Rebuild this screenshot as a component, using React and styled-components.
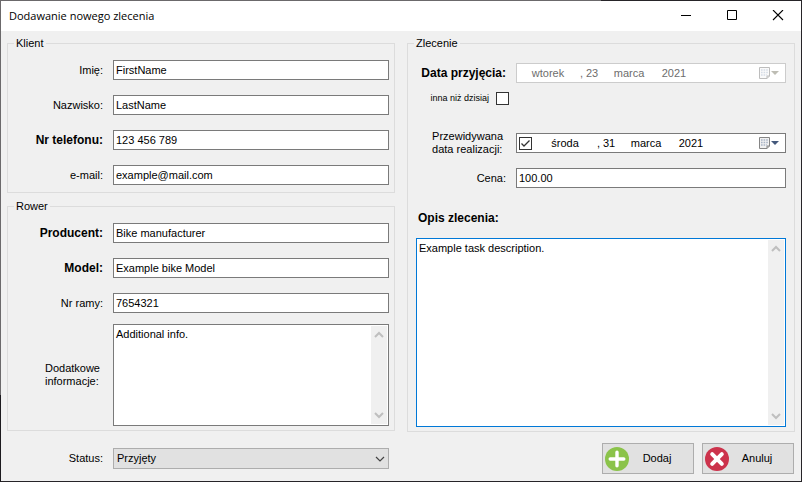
import React from "react";
import styled, { createGlobalStyle, css } from "styled-components";

const GlobalStyle = createGlobalStyle`
  *, *::before, *::after { box-sizing: border-box; }
  html, body, #root { height: 100%; }
  body { margin: 0; background: #f0f0f0; }
  body, input, textarea, select, button {
    font-family: "Liberation Sans", Arial, sans-serif;
    font-size: 11px;
    line-height: 13px;
    color: #000;
  }
`;

const WindowFrame = styled.div`
  min-height: 100%;
  display: flex;
  flex-direction: column;
  padding: 1px;
  background:
    linear-gradient(to right, #6b696b 75%, #262428 75%) top / 100% 1px no-repeat,
    linear-gradient(to bottom, #6b696b 82%, #1c1a1e 82%) left / 1px 100% no-repeat,
    #262428;
`;

const TitleBar = styled.header`
  display: flex;
  align-items: center;
  height: 30px;
  padding-left: 8px;
  background: #fff;
`;

const Title = styled.h1`
  flex: 1;
  margin: 0;
  font: 400 11px/16px "Open Sans", "Noto Sans", sans-serif;
`;

const CaptionButton = styled.button`
  display: grid;
  place-items: center;
  width: 46px;
  height: 30px;
  padding: 0;
  border: 0;
  background: transparent;
`;

const Form = styled.form`
  flex: 1;
  display: grid;
  grid-template-columns: 1fr 1fr;
  grid-template-rows: auto auto;
  align-content: start;
  align-items: start;
  gap: 11px 12px;
  padding: 6px 6px 7px;
  background: #f0f0f0;
`;

const Column = styled.div`
  display: flex;
  flex-direction: column;
  gap: 7px;
  min-width: 0;
`;

const Group = styled.fieldset`
  min-width: 0;
  margin: 0;
  padding: 10px 5px ${(p) => (p.$tight ? 4 : 7)}px 6px;
  border: 1px solid #dcdcdc;
`;

const Legend = styled.legend`
  padding: 0 2px;
  line-height: 13px;
`;

const Rows = styled.div`
  display: flex;
  flex-direction: column;
  gap: 15px;
`;

const Row = styled.div`
  display: grid;
  grid-template-columns: ${(p) => p.$label || 89}px minmax(0, 1fr);
  column-gap: 10px;
  align-items: center;
  margin-top: ${(p) => p.$top || 0}px;
`;

const Label = styled.label`
  justify-self: end;
  white-space: nowrap;
  ${(p) => p.$bold && css`font-weight: 700; font-size: 12px;`}
  ${(p) => p.$lines && css`margin-right: 3px; white-space: pre-line;`}
`;

const TextInput = styled.input`
  width: 100%;
  height: 20px;
  padding: 0 2px;
  border: 1px solid #7a7a7a;
  border-radius: 0;
  background: #fff;
  outline: none;
`;

const MemoFrame = styled.div`
  display: flex;
  height: ${(p) => p.$height}px;
  padding: 1px;
  border: 1px solid ${(p) => (p.$active ? "#0078d7" : "#7a7a7a")};
  background: #fff;
`;

const MemoText = styled.textarea`
  flex: 1;
  min-width: 0;
  padding: 2px 1px;
  border: 0;
  resize: none;
  overflow: hidden;
  outline: none;
  background: transparent;
`;

const ScrollTrack = styled.div`
  display: flex;
  flex-direction: column;
  justify-content: space-between;
  align-items: center;
  width: 16px;
  padding: 5px 0;
  background: #f0f0f0;
`;

const OrderBody = styled.div`
  display: flex;
  flex-direction: column;
  padding: 3px 3px 0 2px;
`;

const OtherDay = styled.div`
  display: flex;
  align-items: center;
  justify-content: flex-end;
  gap: 7px;
  width: 93px;
  margin: 9px 0 25px;
`;

const SmallLabel = styled.label`
  font-size: 9px;
  white-space: nowrap;
`;

const CheckCell = styled.span`
  display: inline-grid;
  flex: none;
  > * { grid-area: 1 / 1; }
  > svg { pointer-events: none; }
  > input:not(:checked) + svg { visibility: hidden; }
`;

const CheckInput = styled.input`
  appearance: none;
  width: 13px;
  height: 13px;
  margin: 0;
  border: 1px solid #333;
  background: #fff;
`;

const DateBox = styled.div`
  display: flex;
  align-items: center;
  height: 20px;
  padding-left: ${(p) => (p.$checkable ? 2 : 1)}px;
  border: 1px solid ${(p) => (p.$off ? "#cccccc" : "#7a7a7a")};
  background: #fff;
  color: ${(p) => (p.$off ? "#6d6d6d" : "#000")};
  ${CheckCell} { margin-right: 3px; }
`;

const DatePart = styled.input`
  flex: none;
  width: ${(p) => p.$width}px;
  height: 18px;
  padding: 0;
  border: 0;
  background: transparent;
  color: inherit;
  text-align: center;
  outline: none;
`;

const Comma = styled.span`
  width: 7px;
  text-align: center;
`;

const CalendarButton = styled.button`
  display: flex;
  align-items: center;
  margin-left: auto;
  height: 18px;
  padding: 0 5px 0 0;
  border: 0;
  background: transparent;
`;

const DescriptionLabel = styled(Label)`
  align-self: flex-start;
  margin: 24px 0 13px 2px;
`;

const StatusRow = styled(Row)`
  align-self: center;
  padding: 0 6px 0 7px;
`;

const SelectCell = styled.div`
  display: grid;
  align-items: center;
  > * { grid-area: 1 / 1; }
  > svg { justify-self: end; margin-right: 4px; pointer-events: none; }
`;

const Select = styled.select`
  appearance: none;
  width: 100%;
  height: 21px;
  padding: 0 20px 0 3px;
  border: 1px solid #adadad;
  border-radius: 0;
  background: #e1e1e1;
`;

const Actions = styled.div`
  display: flex;
  justify-content: flex-end;
  gap: 8px;
  padding-right: 1px;
`;

const ActionButton = styled.button`
  display: flex;
  align-items: center;
  width: 92px;
  height: 31px;
  padding: 0 8px 0 2px;
  border: 1px solid #adadad;
  background: #e1e1e1;
`;

const ActionText = styled.span`
  flex: 1;
  text-align: center;
`;

function ScrollArrow({ down }) {
  return (
    <svg width="10" height="8" viewBox="0 0 10 8" fill="none" stroke="#bfbfbf" strokeWidth="2">
      <path d={down ? "M1 2L5 6L9 2" : "M1 6L5 2L9 6"} />
    </svg>
  );
}

function Memo({ id, height, active, value }) {
  return (
    <MemoFrame $height={height} $active={active}>
      <MemoText id={id} defaultValue={value} spellCheck={false} />
      <ScrollTrack aria-hidden="true">
        <ScrollArrow />
        <ScrollArrow down />
      </ScrollTrack>
    </MemoFrame>
  );
}

function CheckBox(props) {
  return (
    <CheckCell>
      <CheckInput type="checkbox" {...props} />
      <svg width="13" height="13" viewBox="0 0 13 13" fill="none" stroke="#333" strokeWidth="1.3">
        <path d="M2.5 6.5L5 9L10.5 3.5" />
      </svg>
    </CheckCell>
  );
}

function Field({ id, label, bold, value, type = "text", labelWidth, top }) {
  return (
    <Row $label={labelWidth} $top={top}>
      <Label htmlFor={id} $bold={bold}>{label}</Label>
      <TextInput id={id} type={type} defaultValue={value} spellCheck={false} />
    </Row>
  );
}

function CalendarIcon({ off }) {
  const edge = off ? "#bdbdbd" : "#858585";
  const cell = off ? "#d5dce6" : "#a9b4c6";
  return (
    <svg width="22" height="14" viewBox="0 0 22 14">
      <path d="M1.5 1.5H11.5V10L9 12.5H1.5Z" fill={off ? "#fafafa" : "#f1f1f1"} stroke={edge} />
      <path d="M9 12.5V10H11.5" fill="none" stroke={edge} />
      <path d="M3 4H10M3 6.5H10M3 9H9" stroke={cell} strokeWidth="1.6" strokeDasharray="1.6 1" />
      <path d="M13 5H21L17 9Z" fill={off ? "#bebdb4" : "#44597c"} />
    </svg>
  );
}

function DateField({ id, name, day, date, month, year, off, checkable }) {
  return (
    <DateBox role="group" aria-label={name} $off={off} $checkable={checkable}>
      {checkable && <CheckBox defaultChecked aria-label={name} />}
      <DatePart id={id} $width={60} defaultValue={day} disabled={off} />
      <Comma>,</Comma>
      <DatePart $width={14} defaultValue={date} disabled={off} aria-label="Dzień" />
      <DatePart $width={60} defaultValue={month} disabled={off} aria-label="Miesiąc" />
      <DatePart $width={30} defaultValue={year} disabled={off} aria-label="Rok" />
      <CalendarButton type="button" disabled={off} aria-label="Kalendarz">
        <CalendarIcon off={off} />
      </CalendarButton>
    </DateBox>
  );
}

export default function App() {
  return (
    <>
      <GlobalStyle />
      <WindowFrame>
        <TitleBar>
          <Title>Dodawanie nowego zlecenia</Title>
          <CaptionButton type="button" aria-label="Minimalizuj">
            <svg width="12" height="12" stroke="#000"><path d="M1 5.5H11" /></svg>
          </CaptionButton>
          <CaptionButton type="button" aria-label="Maksymalizuj">
            <svg width="12" height="12" fill="none" stroke="#000"><path d="M1.5 0.5H10.5V9.5H1.5Z" /></svg>
          </CaptionButton>
          <CaptionButton type="button" aria-label="Zamknij">
            <svg width="12" height="12" stroke="#000" strokeWidth="1.1"><path d="M1 0L11 10M11 0L1 10" /></svg>
          </CaptionButton>
        </TitleBar>

        <Form onSubmit={(e) => e.preventDefault()}>
          <Column>
            <Group>
              <Legend>Klient</Legend>
              <Rows>
                <Field id="first" label="Imię:" value="FirstName" />
                <Field id="last" label="Nazwisko:" value="LastName" />
                <Field id="phone" label="Nr telefonu:" bold value="123 456 789" type="tel" />
                <Field id="mail" label="e-mail:" value="example@mail.com" type="email" />
              </Rows>
            </Group>
            <Group $tight>
              <Legend>Rower</Legend>
              <Rows>
                <Field id="maker" label="Producent:" bold value="Bike manufacturer" />
                <Field id="model" label="Model:" bold value="Example bike Model" />
                <Field id="frame" label="Nr ramy:" value="7654321" />
              </Rows>
              <Row $top={11}>
                <Label htmlFor="info" $lines>{"Dodatkowe\ninformacje:"}</Label>
                <Memo id="info" height={102} value="Additional info." />
              </Row>
            </Group>
          </Column>

          <Group $tight>
            <Legend>Zlecenie</Legend>
            <OrderBody>
              <Row $label={90}>
                <Label htmlFor="received" $bold>Data przyjęcia:</Label>
                <DateField id="received" name="Data przyjęcia" day="wtorek" date="23" month="marca" year="2021" off />
              </Row>
              <OtherDay>
                <SmallLabel htmlFor="other">inna niż dzisiaj</SmallLabel>
                <CheckBox id="other" />
              </OtherDay>
              <Row $label={90}>
                <Label htmlFor="due" $lines>{"Przewidywana\ndata realizacji:"}</Label>
                <DateField id="due" name="Przewidywana data realizacji" day="środa" date="31" month="marca" year="2021" checkable />
              </Row>
              <Field id="price" label="Cena:" value="100.00" labelWidth={90} top={12} />
              <DescriptionLabel htmlFor="task" $bold>Opis zlecenia:</DescriptionLabel>
              <Memo id="task" height={189} active value="Example task description." />
            </OrderBody>
          </Group>

          <StatusRow>
            <Label htmlFor="status">Status:</Label>
            <SelectCell>
              <Select id="status" defaultValue="Przyjęty">
                <option>Przyjęty</option>
              </Select>
              <svg width="10" height="6" fill="none" stroke="#444" strokeWidth="1.2"><path d="M1 1L5 5L9 1" /></svg>
            </SelectCell>
          </StatusRow>
          <Actions>
            <ActionButton type="submit">
              <svg width="24" height="24" viewBox="0 0 24 24">
                <circle cx="12" cy="12" r="12" fill="#8bc34a" />
                <path d="M12 5.2V18.8M5.2 12H18.8" stroke="#fff" strokeWidth="3.4" strokeLinecap="round" />
              </svg>
              <ActionText>Dodaj</ActionText>
            </ActionButton>
            <ActionButton type="button">
              <svg width="24" height="24" viewBox="0 0 24 24">
                <circle cx="12" cy="12" r="12" fill="#cc334c" />
                <path d="M7.2 7.2L16.8 16.8M16.8 7.2L7.2 16.8" stroke="#fff" strokeWidth="4" strokeLinecap="round" />
              </svg>
              <ActionText>Anuluj</ActionText>
            </ActionButton>
          </Actions>
        </Form>
      </WindowFrame>
    </>
  );
}
